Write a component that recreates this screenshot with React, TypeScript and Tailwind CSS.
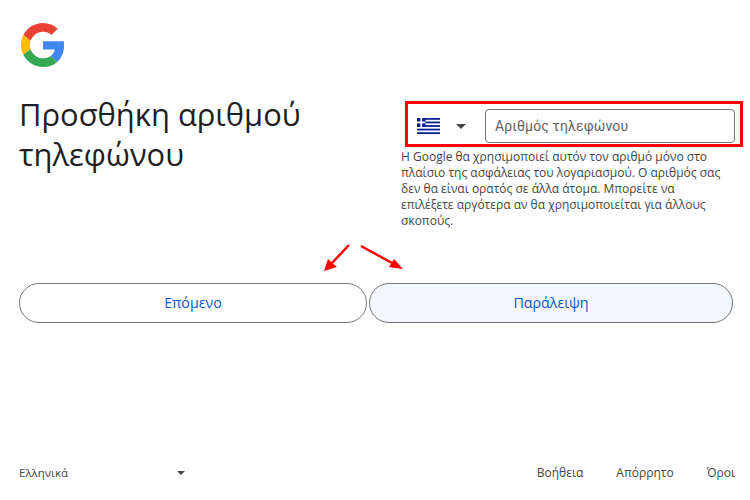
const sans = "font-['Open_Sans',sans-serif]";

function GoogleLogo() {
  return (
    <svg viewBox="0 0 48 48" className="w-[44px] h-[44px]">
      <path fill="#EA4335" d="M24 9.5c3.54 0 6.71 1.22 9.21 3.6l6.85-6.85C35.9 2.38 30.47 0 24 0 14.62 0 6.51 5.38 2.56 13.22l7.98 6.19C12.43 13.72 17.74 9.5 24 9.5z" />
      <path fill="#4285F4" d="M46.98 24.55c0-1.57-.15-3.09-.38-4.55H24v9.02h12.94c-.58 2.96-2.26 5.48-4.78 7.18l7.73 6c4.51-4.18 7.09-10.36 7.09-17.65z" />
      <path fill="#FBBC05" d="M10.53 28.59c-.48-1.45-.76-2.99-.76-4.59s.27-3.14.76-4.59l-7.98-6.19C.92 16.46 0 20.12 0 24c0 3.88.92 7.54 2.56 10.78l7.97-6.19z" />
      <path fill="#34A853" d="M24 48c6.48 0 11.93-2.13 15.89-5.81l-7.73-6c-2.15 1.45-4.92 2.3-8.16 2.3-6.26 0-11.57-4.22-13.47-9.91l-7.98 6.19C6.51 42.62 14.62 48 24 48z" />
    </svg>
  );
}

function GreekFlag() {
  return (
    <svg viewBox="0 0 27 18" preserveAspectRatio="none" className="w-[23px] h-[16px]">
      <rect width="27" height="18" fill="#fff" />
      {[0, 4, 8, 12, 16].map((y) => (
        <rect key={y} x="0" y={y} width="27" height="2" fill="#0b1f94" />
      ))}
      <rect width="10" height="10" fill="#0b1f94" />
      <rect x="4" width="2" height="10" fill="#fff" />
      <rect y="4" width="10" height="2" fill="#fff" />
    </svg>
  );
}

function Caret({ small = false }: { small?: boolean }) {
  return (
    <svg viewBox="0 0 10 5" className={small ? "w-[8px] h-[4px]" : "w-[10px] h-[5px]"}>
      <path d="M0 0h10L5 5z" fill="#444746" />
    </svg>
  );
}

function Arrows() {
  return (
    <svg className="absolute left-[320px] top-[240px] w-[90px] h-[35px]" viewBox="0 0 90 35">
      <path d="M29 5 12 23" stroke="#f00" strokeWidth="2.5" fill="none" />
      <path d="M4 31 8 19 17 27z" fill="#f00" />
      <path d="M41 6 72 23" stroke="#f00" strokeWidth="2.5" fill="none" />
      <path d="M83 29 69 27 74 19z" fill="#f00" />
    </svg>
  );
}

export default function App() {
  return (
    <div className={`relative w-[750px] h-[500px] bg-white overflow-hidden flex flex-col ${sans}`}>
      <div className="pl-[21px] pt-[23px]">
        <GoogleLogo />
      </div>
      <div className="flex mt-[27px] pl-[19px]">
        <h1 className="w-[386px] shrink-0 text-[30.9px] leading-[40px] text-[#1f1f1f] font-normal">
          Προσθήκη αριθμού τηλεφώνου
        </h1>
        <div className="w-[338px] pt-[7px]">
          <div className="w-[338px] h-[46px] border-[3px] border-[#f00] flex items-center pt-[4px] pl-[9px] pr-[5px]">
            <GreekFlag />
            <div className="ml-[16px] mr-[19px]"><Caret /></div>
            <div className="flex-1 h-[34px] border border-[#747775] rounded-[4px] flex items-center pl-[9px] text-[14px] text-[#5f6368] font-['Roboto',sans-serif] tracking-[0.15px]">
              Αριθμός τηλεφώνου
            </div>
          </div>
          <p className="w-[326px] -ml-[4px] mt-[2px] text-[12px] leading-[16px] text-[#444746]">
            Η Google θα χρησιμοποιεί αυτόν τον αριθμό μόνο στο πλαίσιο της ασφάλειας του λογαριασμού. Ο αριθμός σας δεν θα είναι ορατός σε άλλα άτομα. Μπορείτε να επιλέξετε αργότερα αν θα χρησιμοποιείται για άλλους σκοπούς.
          </p>
        </div>
      </div>
      <div className="flex mt-[54px] pl-[19px] gap-[2px]">
        <button className="w-[348px] h-[40px] rounded-full border border-[#747775] bg-white text-[#0b57d0] text-[14.25px] font-medium">
          Επόμενο
        </button>
        <button className="w-[364px] h-[40px] rounded-full border border-[#747775] bg-[#f4f7fc] text-[#0b57d0] text-[14.25px] font-medium">
          Παράλειψη
        </button>
      </div>
      <div className="mt-auto mb-[19px] flex items-center pl-[19px] text-[12px] leading-[16px] text-[#444746]">
        <div className="w-[166px] flex items-center justify-between">
          <span className="text-[11.5px]">Ελληνικά</span>
          <Caret small />
        </div>
        <div className="ml-auto flex gap-[33px] pr-[15px]">
          <span>Βοήθεια</span>
          <span>Απόρρητο</span>
          <span>Όροι</span>
        </div>
      </div>
      <Arrows />
    </div>
  );
}
